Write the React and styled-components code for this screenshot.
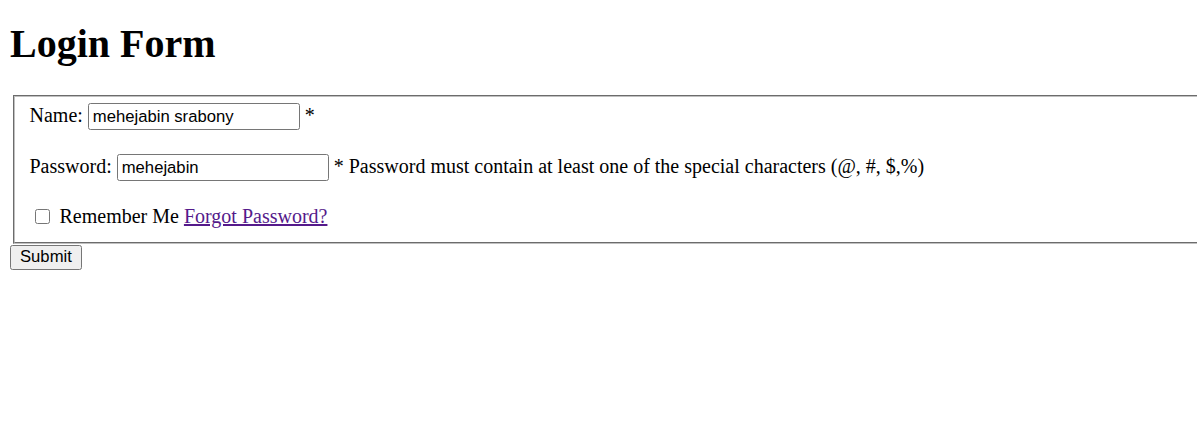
import React from "react";
import styled, { createGlobalStyle } from "styled-components";

const GlobalStyle = createGlobalStyle`
  html {
    overflow: hidden;
  }
  body {
    margin: 10px 0 10px 10px;
    font-family: "Liberation Serif", "Times New Roman", serif;
    font-size: 20px;
    color: #000;
    background: #fff;
  }
`;

const Title = styled.h1`
  margin: 11px 0 28px;
  font-size: 40px;
  line-height: 46px;
  font-weight: bold;
`;

const Fieldset = styled.fieldset`
  box-sizing: border-box;
  width: calc(100% + 20px);
  margin: 0 2.5px;
  padding: 6px 15px 13.5px;
  border: 2.5px groove #c0c0c0;
  display: flex;
  flex-direction: column;
  gap: 24px;
`;

const Row = styled.div`
  display: flex;
  align-items: baseline;
  gap: 5px;
  height: ${(p) => (p.$plain ? "auto" : "27px")};
  white-space: nowrap;
`;

const TextInput = styled.input`
  box-sizing: border-box;
  width: 212px;
  height: 27px;
  margin: 0;
  padding: 1.25px 4px;
  border: 1px solid #767676;
  border-radius: 2.5px;
  font-family: "Liberation Sans", Arial, sans-serif;
  font-size: 16.67px;
  color: #000;
`;

const Check = styled.input`
  width: 15px;
  height: 15px;
  margin: 3.75px 5px 3.75px 5px;
  align-self: center;
`;

const ForgotLink = styled.a`
  color: #551a8b;
  text-decoration: underline;
`;

const SubmitButton = styled.button`
  display: block;
  height: 25px;
  margin: 1px 0 0;
  padding: 1px 9px;
  border: 1px solid #767676;
  border-radius: 2.5px;
  background: #efefef;
  font-family: "Liberation Sans", Arial, sans-serif;
  font-size: 16.67px;
  color: #000;
`;

export default function App() {
  return (
    <>
      <GlobalStyle />
      <Title>Login Form</Title>
      <form onSubmit={(e) => e.preventDefault()}>
        <Fieldset>
          <Row>
            <label>Name:</label>
            <TextInput type="text" defaultValue="mehejabin srabony" />
            <span>*</span>
          </Row>
          <Row>
            <label>Password:</label>
            <TextInput type="text" defaultValue="mehejabin" />
            <span>
              * Password must contain at least one of the special characters
              (@, #, $,%)
            </span>
          </Row>
          <Row $plain>
            <Check type="checkbox" />
            <span>Remember Me</span>
            <ForgotLink href="#">Forgot Password?</ForgotLink>
          </Row>
        </Fieldset>
        <SubmitButton type="submit">Submit</SubmitButton>
      </form>
    </>
  );
}
